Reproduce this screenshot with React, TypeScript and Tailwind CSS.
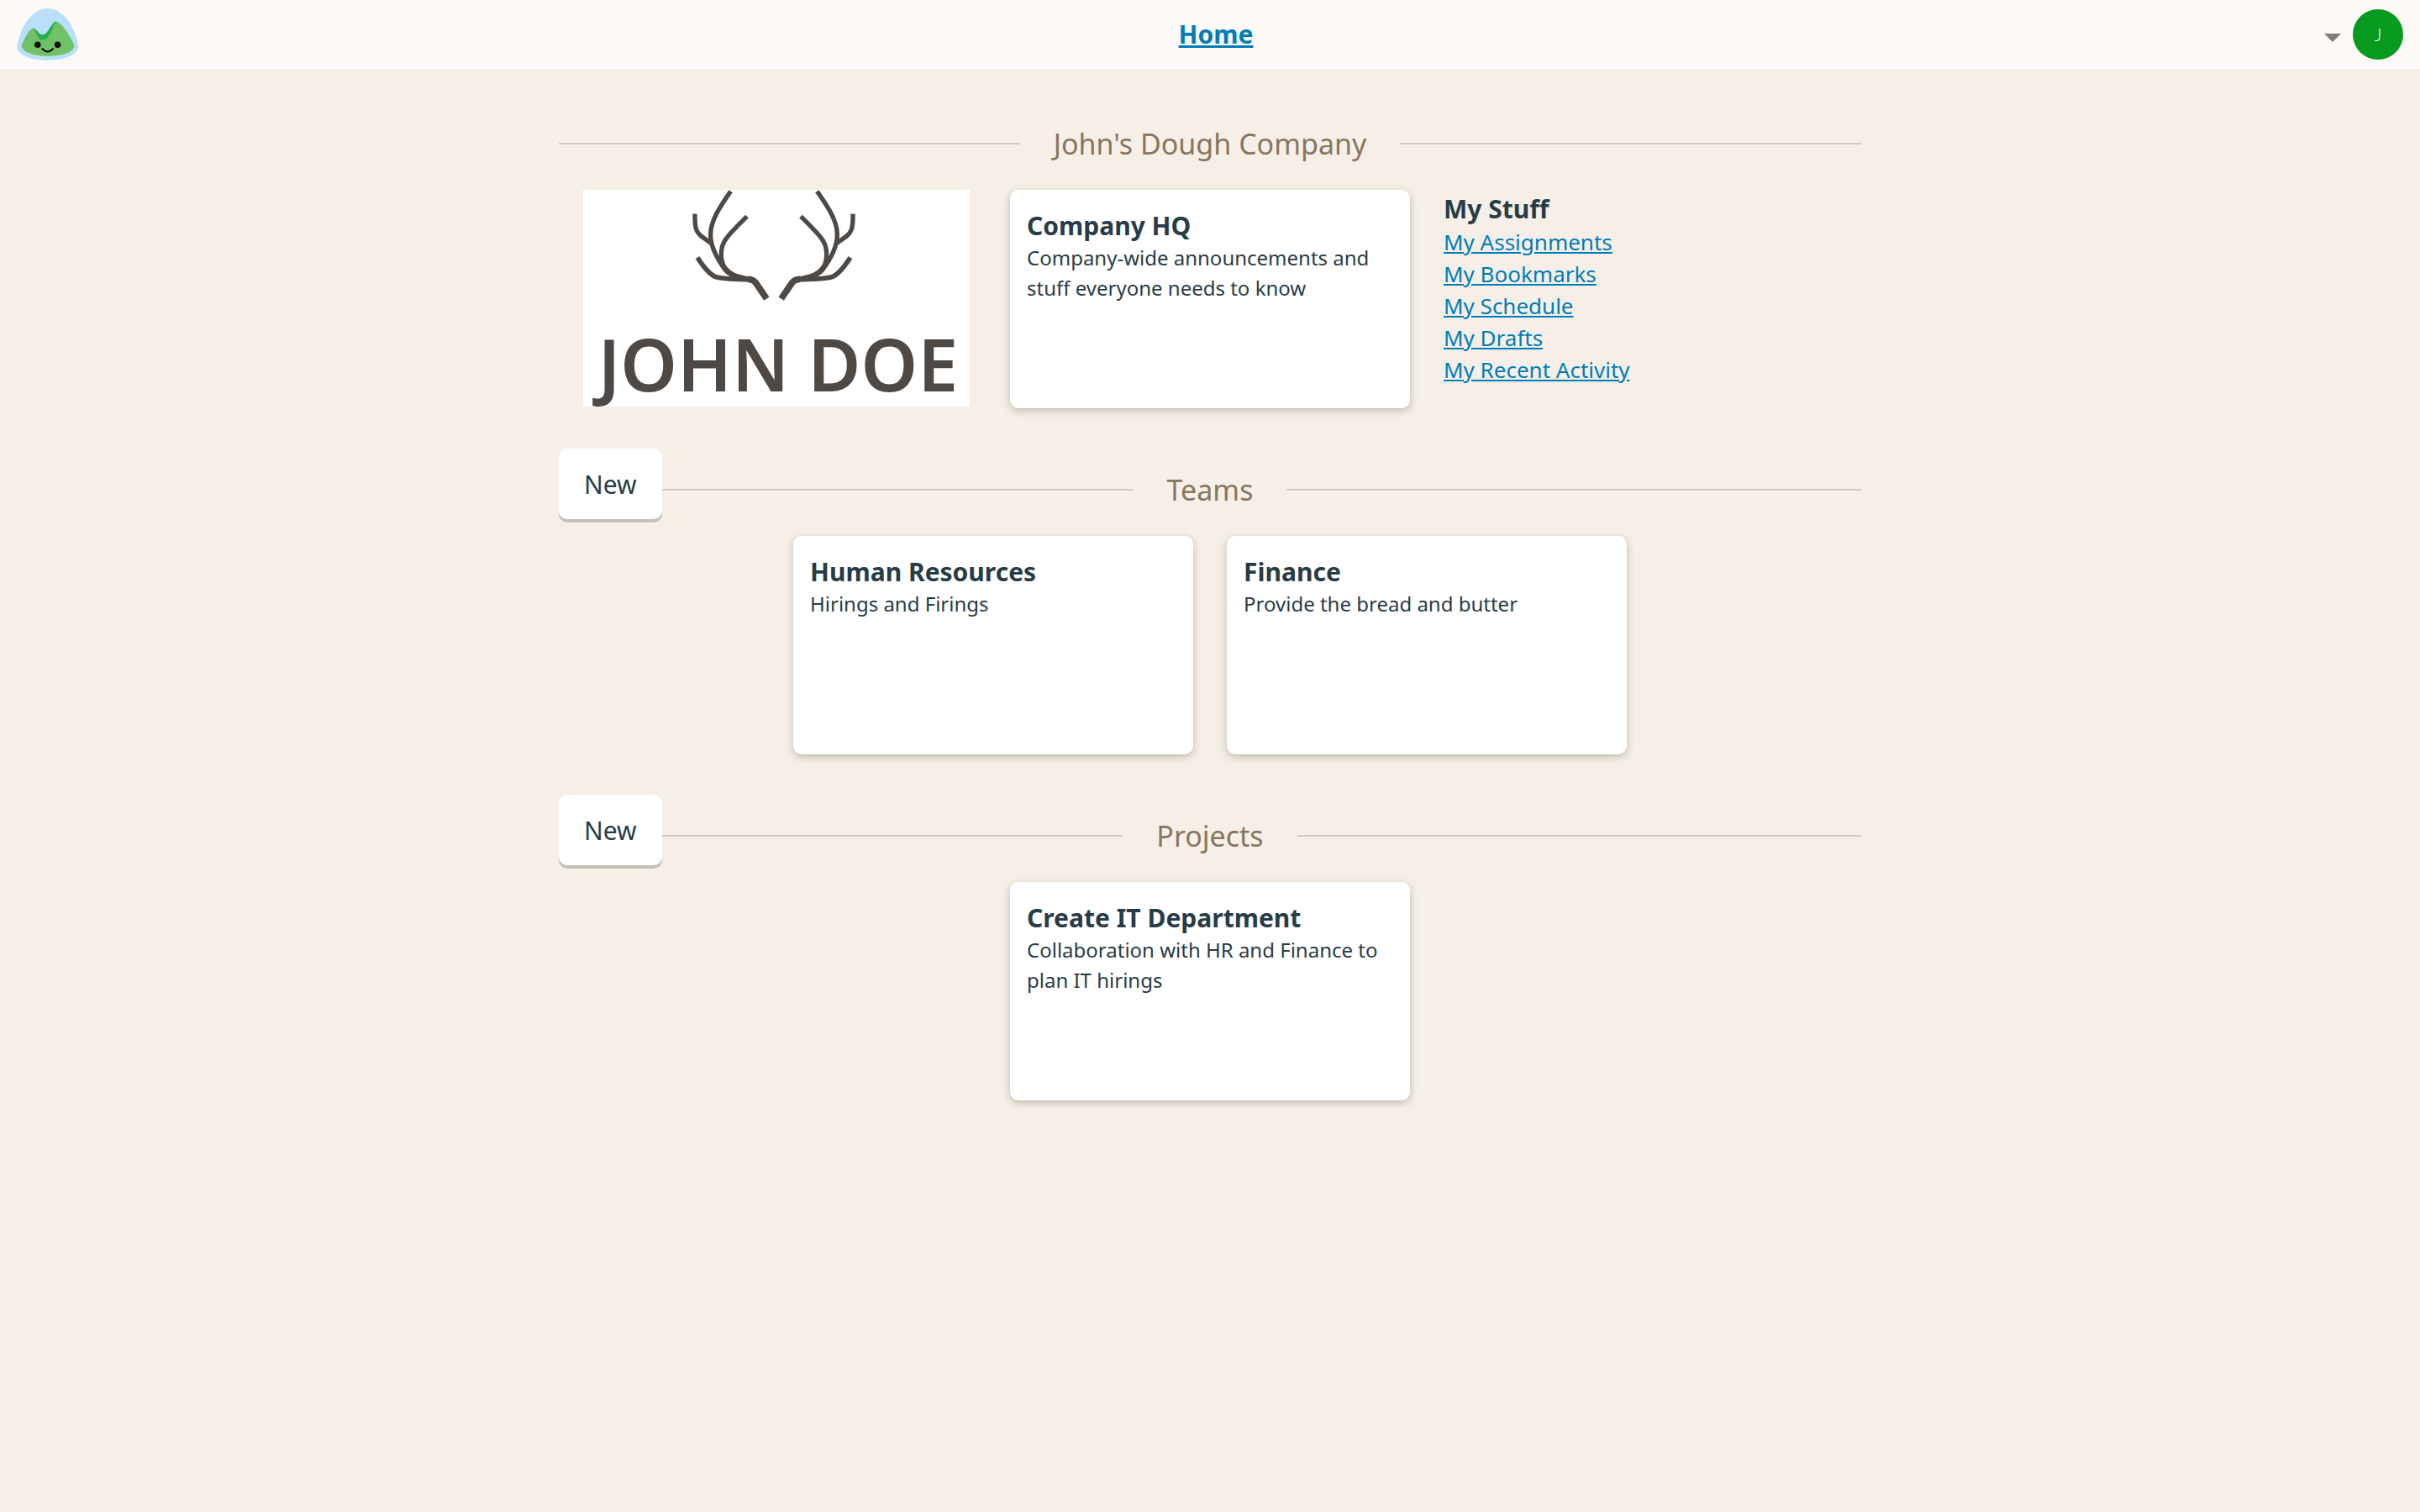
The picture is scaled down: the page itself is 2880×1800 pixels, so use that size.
import type { ReactNode } from "react";

type CardData = { title: string; text: string };

const links = ["My Assignments", "My Bookmarks", "My Schedule", "My Drafts", "My Recent Activity"];

const teams: CardData[] = [
  { title: "Human Resources", text: "Hirings and Firings" },
  { title: "Finance", text: "Provide the bread and butter" },
];

const projects: CardData[] = [
  { title: "Create IT Department", text: "Collaboration with HR and Finance to plan IT hirings" },
];

function CampLogo() {
  return (
    <svg viewBox="60 29 222 188" className="h-[62px] w-[74px]" aria-hidden="true">
      <path
        fill="#b9dff9"
        d="M60 164C74 84 120 29 170 29C220 29 266 84 281 164C281 196 234 216 170 216C106 216 60 198 60 164Z"
      />
      <path
        fill="#70c168"
        d="M76 164C90 128 106 101 118 101C126 102 134 132 152 134C172 132 184 76 201 75C219 80 250 122 267 163C262 190 218 201 171 201C124 201 80 190 76 164Z"
      />
      <path
        fill="#27b04f"
        d="M116 101C132 100 136 124 152 124C172 124 184 77 202 75C190 88 178 144 151 144C132 144 128 108 116 101Z"
      />
      <circle cx="134" cy="160" r="11.5" fill="#111" />
      <circle cx="206" cy="160" r="11.5" fill="#111" />
      <path d="M151 175Q170 194 189 175" fill="none" stroke="#111" strokeWidth="6.5" strokeLinecap="round" />
    </svg>
  );
}

function Antler() {
  return (
    <g fill="none" stroke="#4f4946">
      <path strokeWidth="23" d="M697 422L659 366Q650 353 630 352" />
      <path strokeWidth="17" d="M640 353Q550 352 516 344Q490 336 450 275" />
      <path strokeWidth="16" d="M640 353C600 344 566 340 549 318C510 266 496 222 497 190C498 140 532 92 569 38" />
      <path strokeWidth="16" d="M610 346C552 334 535 300 535 266C535 232 543 216 570 186Q598 156 627 128" />
      <path strokeWidth="16" d="M502 226L467 201C445 186 440 168 441 119" />
    </g>
  );
}

function CompanyLogo() {
  return (
    <svg
      viewBox="42 33 1380 774"
      className="h-[258px] w-[460px] overflow-visible bg-white"
      role="img"
      aria-label="John Doe"
    >
      <Antler />
      <g transform="matrix(-1 0 0 1 1446 0)">
        <Antler />
      </g>
      <text x="738" y="754" textAnchor="middle" fontSize="258" fill="#4f4946" className="font-['Noto_Sans'] font-semibold">
        JOHN DOE
      </text>
    </svg>
  );
}

function Card({ title, text }: CardData) {
  return (
    <a
      href="#"
      className="flex h-[260px] w-[476px] flex-col rounded-[10px] bg-white px-5 pt-[23px] shadow-[0_3px_10px_rgba(70,70,40,0.32)]"
    >
      <h3 className="text-[30px] leading-[40px] font-bold">{title}</h3>
      <p className="text-[24px] leading-[36px]">{text}</p>
    </a>
  );
}

function Section({ title, action, children }: { title: string; action?: boolean; children: ReactNode }) {
  return (
    <section className="flex flex-col gap-[6px]">
      <div className="grid h-[98px] grid-cols-[1fr_auto_1fr] items-center gap-10">
        <div className="flex h-full items-center">
          {action && (
            <button
              type="button"
              className="h-[84px] self-start rounded-[10px] bg-white px-[30px] pt-[2px] text-[30px] leading-[40px] shadow-[0_4px_0_#c6c0bb]"
            >
              New
            </button>
          )}
          <span className="h-[2px] flex-1 bg-[#cfcac5]" />
        </div>
        <h2 className="text-[34px] leading-[48px] text-[#87765d]">{title}</h2>
        <span className="h-[2px] bg-[#cfcac5]" />
      </div>
      <div className="flex justify-center gap-10">{children}</div>
    </section>
  );
}

export default function App() {
  return (
    <div className="min-h-screen bg-[#f6efe8] font-['Noto_Sans',sans-serif] text-[#283c46]">
      <header className="grid h-[82px] grid-cols-[auto_1fr_auto] items-center bg-[#fdf9f6] px-5">
        <a href="#" aria-label="Basecamp">
          <CampLogo />
        </a>
        <nav className="grid items-center">
          <a
            href="#"
            className="col-start-1 row-start-1 justify-self-center text-[30px] leading-[40px] font-bold text-[#007db8] underline"
          >
            Home
          </a>
          <button
            type="button"
            aria-label="Account menu"
            className="col-start-1 row-start-1 flex items-center justify-self-end px-[14px] pt-2"
          >
            <svg viewBox="0 0 20 10" className="h-[10px] w-[20px]" aria-hidden="true">
              <path d="M0 0H20L10 10Z" fill="#807b7a" />
            </svg>
          </button>
        </nav>
        <span className="flex size-[60px] items-center justify-center rounded-full bg-[#069b1e] font-[Lato] text-[21px] font-light text-white">
          J
        </span>
      </header>

      <main className="mx-auto flex max-w-[1550px] flex-col gap-12 pt-10">
        <Section title="John's Dough Company">
          <div className="flex w-[476px] justify-center">
            <CompanyLogo />
          </div>
          <Card title="Company HQ" text="Company-wide announcements and stuff everyone needs to know" />
          <div className="w-[476px] pt-[3px]">
            <h3 className="text-[30px] leading-[40px] font-bold">My Stuff</h3>
            <ul>
              {links.map((label) => (
                <li key={label} className="text-[26px] leading-[38px]">
                  <a href="#" className="text-[#007db8] underline">
                    {label}
                  </a>
                </li>
              ))}
            </ul>
          </div>
        </Section>

        <Section title="Teams" action>
          {teams.map((card) => (
            <Card key={card.title} {...card} />
          ))}
        </Section>

        <Section title="Projects" action>
          {projects.map((card) => (
            <Card key={card.title} {...card} />
          ))}
        </Section>
      </main>
    </div>
  );
}
